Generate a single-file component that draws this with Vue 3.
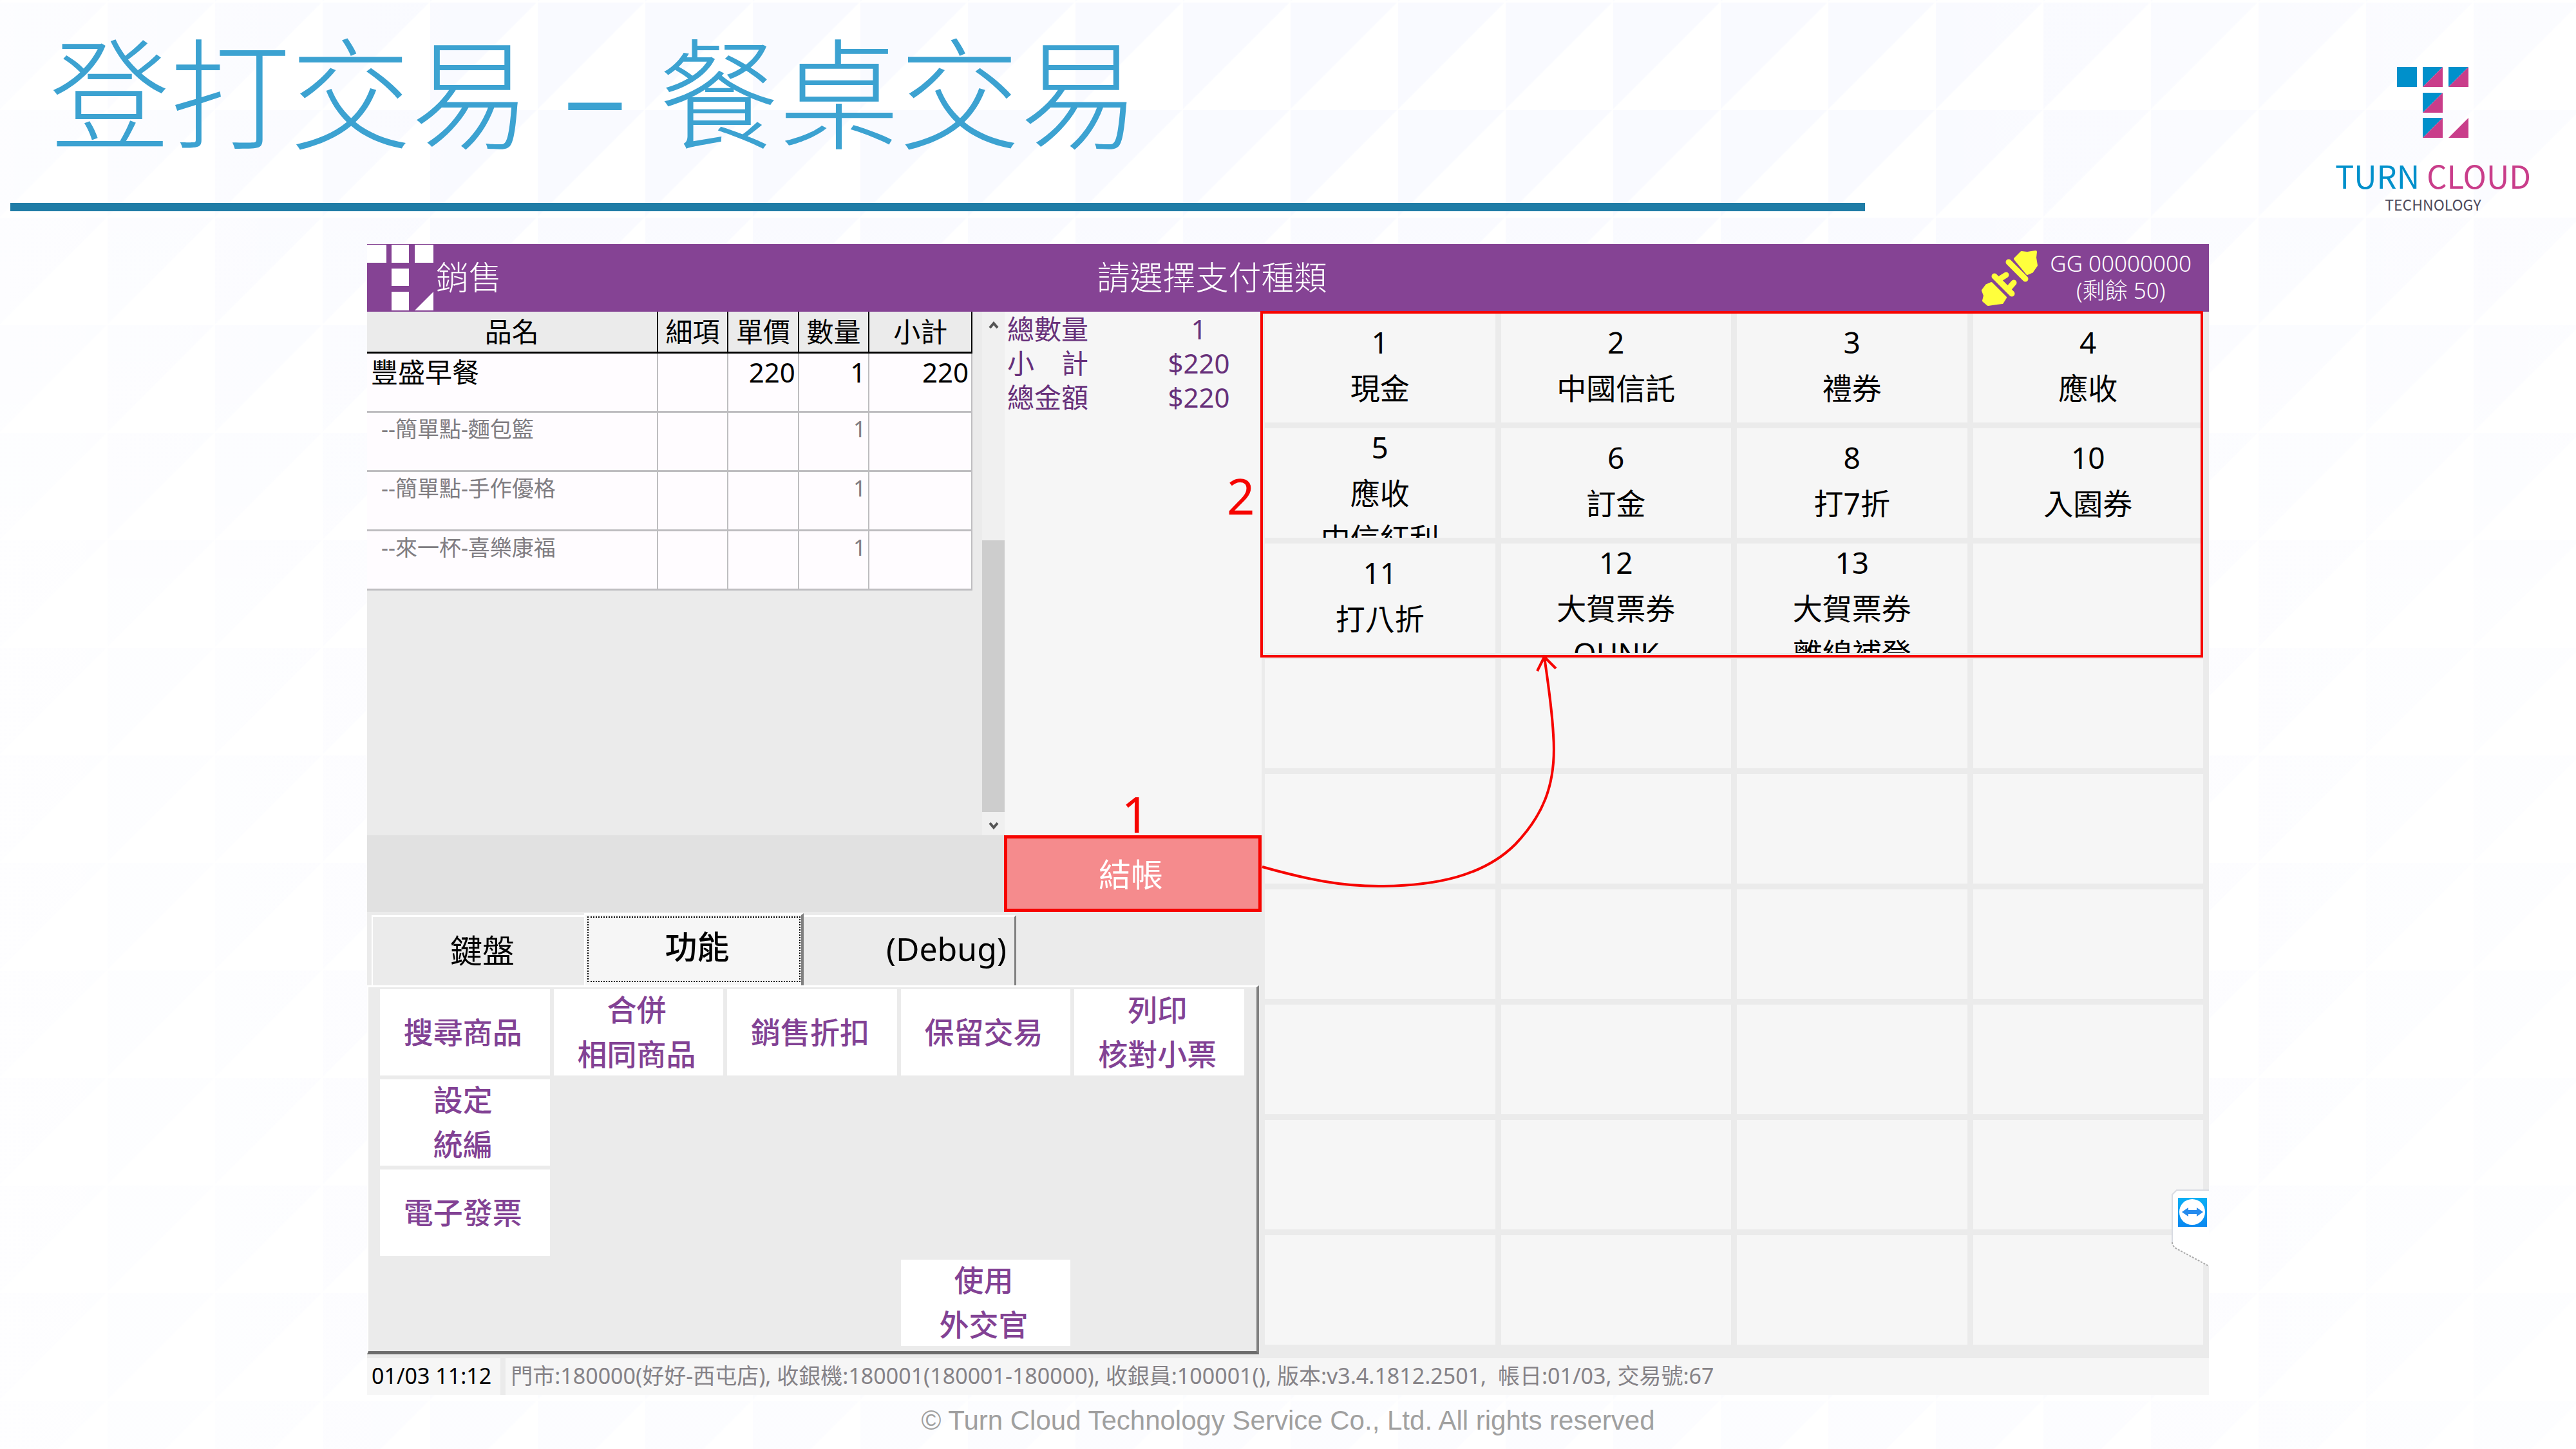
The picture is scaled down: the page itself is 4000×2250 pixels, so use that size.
<script setup>
import { ref } from 'vue'

const lines = [
  { name: '豐盛早餐', price: '220', qty: '1', sum: '220' },
  { name: '--簡單點-麵包籃', qty: '1', sub: true },
  { name: '--簡單點-手作優格', qty: '1', sub: true },
  { name: '--來一杯-喜樂康福', qty: '1', sub: true },
]

const totals = [
  { label: '總數量', value: '1' },
  { label: '小　計', value: '$220' },
  { label: '總金額', value: '$220' },
]

const payments = [
  { no: '1', text: ['現金'] },
  { no: '2', text: ['中國信託'] },
  { no: '3', text: ['禮券'] },
  { no: '4', text: ['應收'] },
  { no: '5', text: ['應收', '中信紅利'] },
  { no: '6', text: ['訂金'] },
  { no: '8', text: ['打7折'] },
  { no: '10', text: ['入園券'] },
  { no: '11', text: ['打八折'] },
  { no: '12', text: ['大賀票券', 'QUNK'] },
  { no: '13', text: ['大賀票券', '離線補登'] },
]
const slots = Array.from({ length: 36 }, (_, i) => payments[i] || null)

const functions = [
  ['搜尋商品'], ['合併', '相同商品'], ['銷售折扣'], ['保留交易'], ['列印', '核對小票'],
  ['設定', '統編'], null, null, null, null,
  ['電子發票'], null, null, null, null,
  null, null, null, ['使用', '外交官'], null,
]

const tabs = ['鍵盤', '功能', '(Debug)']
const active = ref(1)
</script>

<template>
  <div class="slide">
    <header class="head">
      <div class="head-title">
        <h1>登打交易 <span class="dash">–</span> 餐桌交易</h1>
        <div class="rule"></div>
      </div>
      <div class="brand">
        <svg class="brand-mark" viewBox="0 0 111 110" aria-hidden="true">
          <g fill="#0090cb">
            <rect x="0" y="0" width="31" height="31" />
            <path d="M40 0h31L40 31z" />
            <path d="M80 0h31L80 31z" />
            <path d="M40 40h31L40 71z" />
            <path d="M40 79h31L40 110z" />
          </g>
          <g fill="#c93d8a">
            <path d="M71 0v31H40z" />
            <path d="M111 0v31H80z" />
            <path d="M71 40v31H40z" />
            <path d="M71 79v31H40z" />
            <path d="M111 79v31H80z" />
          </g>
        </svg>
        <div class="brand-name"><span class="blue">TURN</span> <span class="pink">CLOUD</span></div>
        <div class="brand-sub">TECHNOLOGY</div>
      </div>
    </header>

    <main class="pos">
      <div class="bar">
        <div class="bar-left">
          <svg class="bar-mark" viewBox="0 0 103 105" aria-hidden="true">
            <g fill="#fff">
              <rect x="0" y="1" width="30" height="28" />
              <rect x="38" y="1" width="27" height="28" />
              <rect x="74" y="1" width="29" height="28" />
              <rect x="38" y="38" width="27" height="27" />
              <rect x="38" y="74" width="27" height="29" />
              <path d="M103 74v29H74z" />
            </g>
          </svg>
          <span>銷售</span>
        </div>
        <div class="bar-title">請選擇支付種類</div>
        <div class="bar-right">
          <svg class="plug" viewBox="0 0 88 88" aria-hidden="true">
            <g fill="#ffff3c" stroke="#ffff3c" stroke-linejoin="round" stroke-linecap="round">
              <path stroke-width="4" d="M52 14 62 4 71 5 84 3 83 12 85 24 78 34 71 37z" />
              <path stroke-width="9" d="M42 19 68 45" />
              <path stroke-width="9" d="M20 41 47 68M30 44 38 39M43 59 50 51" />
              <path stroke-width="4" d="M15 52 37 74 32 82 23 83 10 85 3 79 5 71 2 63 8 55z" />
            </g>
          </svg>
          <div class="license">
            <div>GG 00000000</div>
            <div>(剩餘 50)</div>
          </div>
        </div>
      </div>

      <div class="body">
        <section class="left">
          <div class="order">
            <div class="list">
              <table>
                <colgroup>
                  <col class="c-name"><col class="c-opt"><col class="c-opt"><col class="c-opt"><col class="c-sum">
                </colgroup>
                <thead>
                  <tr><th>品名</th><th>細項</th><th>單價</th><th>數量</th><th>小計</th></tr>
                </thead>
                <tbody>
                  <tr v-for="line in lines" :key="line.name" :class="{ sub: line.sub }">
                    <td class="name">{{ line.name }}</td>
                    <td></td>
                    <td>{{ line.price }}</td>
                    <td>{{ line.qty }}</td>
                    <td>{{ line.sum }}</td>
                  </tr>
                </tbody>
              </table>
            </div>
            <div class="scroll">
              <svg viewBox="0 0 16 12" aria-hidden="true"><path d="M2 10 8 3l6 7" /></svg>
              <div class="track"><div class="thumb"></div></div>
              <svg viewBox="0 0 16 12" aria-hidden="true"><path d="M2 2l6 7 6-7" /></svg>
            </div>
            <dl class="totals">
              <div v-for="t in totals" :key="t.label">
                <dt>{{ t.label }}</dt><dd>{{ t.value }}</dd>
              </div>
            </dl>
          </div>

          <div class="action">
            <button type="button" class="checkout">結帳</button>
            <span class="step step-one">1</span>
          </div>

          <div class="tabs" role="tablist">
            <button
              v-for="(tab, i) in tabs" :key="tab" type="button" role="tab"
              :aria-selected="i === active" :class="{ on: i === active, last: i === 2 }"
              @click="active = i"
            >{{ tab }}</button>
          </div>

          <div class="panel" role="tabpanel">
            <template v-for="(fn, i) in functions" :key="i">
              <button v-if="fn" type="button">
                <span v-for="row in fn" :key="row">{{ row }}</span>
              </button>
              <div v-else></div>
            </template>
          </div>
        </section>

        <section class="pay">
          <template v-for="(slot, i) in slots" :key="i">
            <button v-if="slot" type="button" class="cell">
              <span class="no">{{ slot.no }}</span>
              <span v-for="row in slot.text" :key="row" class="label">{{ row }}</span>
            </button>
            <div v-else class="cell"></div>
          </template>
          <div class="frame"></div>
          <span class="step step-two">2</span>
          <svg class="arrow" viewBox="0 0 480 380" aria-hidden="true">
            <path d="M2 335C70 354 125 366 190 365C270 364 345 350 395 300C435 258 460 210 454 130C452 90 446 50 440 9M429 31 440 9 458 27" />
          </svg>
          <svg class="remote" viewBox="0 0 58 120" aria-hidden="true">
            <defs>
              <linearGradient id="tv" x1="0" y1="0" x2="0" y2="1">
                <stop offset="0" stop-color="#0bb0f5" />
                <stop offset="1" stop-color="#0a88f0" />
              </linearGradient>
            </defs>
            <path d="M58 1H8L1 8v74q0 5 5 9l52 28z" fill="#fff" />
            <path d="M58 1H8L1 8v74" fill="none" stroke="#d8dbe2" stroke-width="2" />
            <path d="M1 82q0 5 5 9l52 28" fill="none" stroke="#aaa" stroke-width="2" stroke-dasharray="3 2" />
            <rect x="10" y="13" width="45" height="45" fill="url(#tv)" />
            <circle cx="32" cy="35" r="20" fill="#fff" />
            <path d="M16 35l10-7v4h13v-4l10 7-10 7v-4H26v4z" fill="#258bee" />
          </svg>
        </section>
      </div>

      <div class="status">
        <span class="clock">01/03 11:12</span>
        <span class="info">門市:180000(好好-西屯店), 收銀機:180001(180001-180000), 收銀員:100001(), 版本:v3.4.1812.2501,&nbsp; 帳日:01/03, 交易號:67</span>
      </div>
    </main>

    <footer>© Turn Cloud Technology Service Co., Ltd. All rights reserved</footer>
  </div>
</template>

<style>
body {
  margin: 0;
  background: #fff;
}
</style>

<style scoped>
.slide {
  box-sizing: border-box;
  min-height: 100vh;
  overflow: hidden;
  background:
    linear-gradient(90deg, #ffffff99, #ffffff00 20%, #ffffff00 70%, #ffffff66),
    linear-gradient(180deg, #ffffff00 10%, #ffffff80 40%),
    linear-gradient(135deg, #f9faff 49%, #fff 50%) 0 4px / 167px 167px;
  font-family: "Noto Sans", "Noto Sans CJK TC", sans-serif;
}
.head {
  display: flex;
  justify-content: space-between;
  height: 379px;
}
.head-title {
  width: 72.4%;
}
h1 {
  box-sizing: border-box;
  height: 315px;
  margin: 0 0 0 77px;
  padding-top: 17px;
  font-size: 187px;
  font-weight: 300;
  line-height: 240px;
  color: #3ca2d1;
  white-space: nowrap;
}
.dash {
  font-family: "Noto Sans CJK TC", sans-serif;
  font-weight: 400;
}
.rule {
  height: 13px;
  margin-left: 16px;
  background: #1f7ca6;
}
.brand {
  display: flex;
  flex-direction: column;
  align-items: center;
  padding: 104px 70px 0 0;
  font-family: "Noto Sans CJK TC", sans-serif;
  text-align: center;
}
.brand-mark {
  width: 111px;
  height: 110px;
}
.brand-name {
  margin-top: 30px;
  font-size: 49px;
  line-height: 56px;
}
.blue {
  color: #0090cb;
}
.pink {
  color: #c93d8a;
}
.brand-sub {
  font-size: 23px;
  line-height: 34px;
  color: #4c4a5c;
}

.pos {
  width: 71.5%;
  margin: 0 auto;
  background: #ebebeb;
}
button {
  margin: 0;
  border: 0;
  padding: 0;
  font: inherit;
  color: inherit;
}
.bar {
  display: grid;
  grid-template-columns: 1fr auto 1fr;
  align-items: center;
  height: 105px;
  background: #854394;
  color: #fff;
  font-size: 51px;
  font-weight: 300;
  line-height: 60px;
}
.bar-left {
  display: flex;
  align-items: center;
  gap: 4px;
}
.bar-left span,
.bar-title {
  padding-bottom: 4px;
}
.bar-mark {
  width: 103px;
  height: 105px;
}
.bar-title {
  padding-right: 236px;
}
.bar-right {
  display: flex;
  justify-content: flex-end;
  align-items: center;
  gap: 18px;
  padding-right: 27px;
}
.plug {
  width: 88px;
  height: 88px;
}
.license {
  padding-bottom: 4px;
  font-size: 35px;
  line-height: 42px;
  text-align: center;
}

.body {
  display: grid;
  grid-template-columns: 1389fr 1471fr;
}
.left {
  display: flex;
  flex-direction: column;
  min-width: 0;
}
.order {
  display: grid;
  grid-template-columns: 955fr 35px 399fr;
  min-height: 813px;
}
.list {
  padding-right: 15px;
}
table {
  width: 100%;
  border-collapse: collapse;
  table-layout: fixed;
  font-size: 42px;
  line-height: 50px;
}
.c-name { width: 48%; }
.c-opt { width: 11.67%; }
.c-sum { width: 17%; }
th {
  box-sizing: border-box;
  height: 63px;
  padding: 0;
  border-right: 2px solid #000;
  border-bottom: 3px solid #000;
  font-weight: 400;
}
td {
  box-sizing: border-box;
  height: 92px;
  padding: 4px 4px 0 6px;
  border-right: 2px solid #bebdc0;
  border-bottom: 3px solid #bebdc0;
  background: #fffcff;
  text-align: right;
  vertical-align: top;
}
td.name {
  text-align: left;
}
.sub td {
  padding-top: 0;
  font-size: 34px;
  color: #807d82;
}
.sub td.name {
  padding-left: 22px;
}
.scroll {
  display: flex;
  flex-direction: column;
  align-items: center;
  padding: 15px 0 9px;
  background: #f0f0f0;
}
.scroll svg {
  width: 16px;
  height: 12px;
  fill: none;
  stroke: #555;
  stroke-width: 4;
}
.track {
  display: flex;
  flex: 1;
  flex-direction: column;
  justify-content: flex-end;
  width: 100%;
  padding-bottom: 15px;
}
.thumb {
  height: 422px;
  background: #cdcdcd;
}
.totals {
  margin: 0;
  background: #f6f6f6;
  color: #67307a;
  font-size: 42px;
  line-height: 53px;
}
.totals div {
  display: grid;
  grid-template-columns: 200px 1fr;
}
.totals dt {
  padding-left: 4px;
}
.totals dd {
  margin: 0;
  padding-left: 4px;
  text-align: center;
}
.action {
  position: relative;
  display: flex;
  justify-content: flex-end;
  background: #e1e1e1;
}
.checkout {
  width: 400px;
  height: 119px;
  padding: 0 6px 2px 0;
  border: 5px solid #f60400;
  background: #f58b8d;
  color: #fff;
  font-size: 50px;
}
.step {
  position: absolute;
  color: #f60400;
  font-size: 76px;
  line-height: 76px;
}
.step-one {
  right: 174px;
  bottom: 114px;
}
.step-two {
  left: -54px;
  top: 248px;
}
.tabs {
  display: flex;
  padding: 2px 0 0 7px;
  font-size: 50px;
}
.tabs button {
  box-sizing: border-box;
  width: 330px;
  height: 109px;
  margin-top: 3px;
  padding: 0 0 8px 12px;
  border-top: 3px solid #fff;
  border-left: 2px solid #fff;
  background: #ebebeb;
}
.tabs .on {
  width: 341px;
  height: 112px;
  margin-top: 0;
  padding-bottom: 16px;
  border-right: 4px solid #808080;
  background: #f6f6f6;
  font-weight: 500;
  outline: 2px dotted #000;
  outline-offset: -7px;
}
.tabs .last {
  border-left: 0;
  border-right: 3px solid #808080;
  padding-right: 12px;
  text-align: right;
}
.panel {
  display: grid;
  grid-template-columns: repeat(5, 1fr);
  grid-auto-rows: 134px;
  gap: 6px;
  margin-right: 4px;
  padding: 3px 19px 8px 18px;
  border: solid;
  border-width: 3px 4px 5px 2px;
  border-color: #fff #808080 #6c6c6c #fff;
  color: #824294;
  font-size: 46px;
  font-weight: 500;
  line-height: 69px;
}
.panel button {
  display: flex;
  flex-direction: column;
  justify-content: center;
  align-items: center;
  background: #fff;
  padding: 0 6px 2px 0;
  white-space: nowrap;
}

.pay {
  position: relative;
  display: grid;
  grid-template-columns: repeat(4, 1fr);
  grid-auto-rows: 170px;
  align-content: start;
  gap: 9px;
  padding: 2px 9px 8px 5px;
  font-size: 46px;
}
.cell {
  display: flex;
  flex-direction: column;
  justify-content: safe center;
  align-items: center;
  min-width: 0;
  min-height: 0;
  overflow: hidden;
  padding-bottom: 4px;
  background: #f6f6f6;
}
div.cell {
  padding: 0;
}
.no {
  margin-bottom: 7px;
  line-height: 58px;
}
.label {
  line-height: 70px;
  white-space: nowrap;
}
.frame {
  position: absolute;
  grid-area: 1 / 1 / 4 / 5;
  inset: -3px 0 -7px -7px;
  border: 4px solid #f60400;
  pointer-events: none;
}
.arrow {
  position: absolute;
  left: -1px;
  top: 527px;
  width: 480px;
  height: 380px;
  fill: none;
  stroke: #f60400;
  stroke-width: 4;
}
.remote {
  position: absolute;
  right: 0;
  bottom: 136px;
  width: 58px;
  height: 120px;
}
.status {
  display: flex;
  gap: 8px;
  padding-top: 6px;
  font-size: 34px;
  line-height: 55px;
  white-space: nowrap;
}
.status span {
  padding-bottom: 2px;
  background: #f6f6f6;
}
.status .clock {
  padding-right: 14px;
  padding-left: 7px;
}
.status .info {
  flex: 1;
  padding-left: 8px;
  color: #858287;
}
footer {
  padding: 16px 0;
  font-family: "Liberation Sans", Arial, sans-serif;
  font-size: 42px;
  line-height: 48px;
  text-align: center;
  color: #a0a0a0;
}
</style>
